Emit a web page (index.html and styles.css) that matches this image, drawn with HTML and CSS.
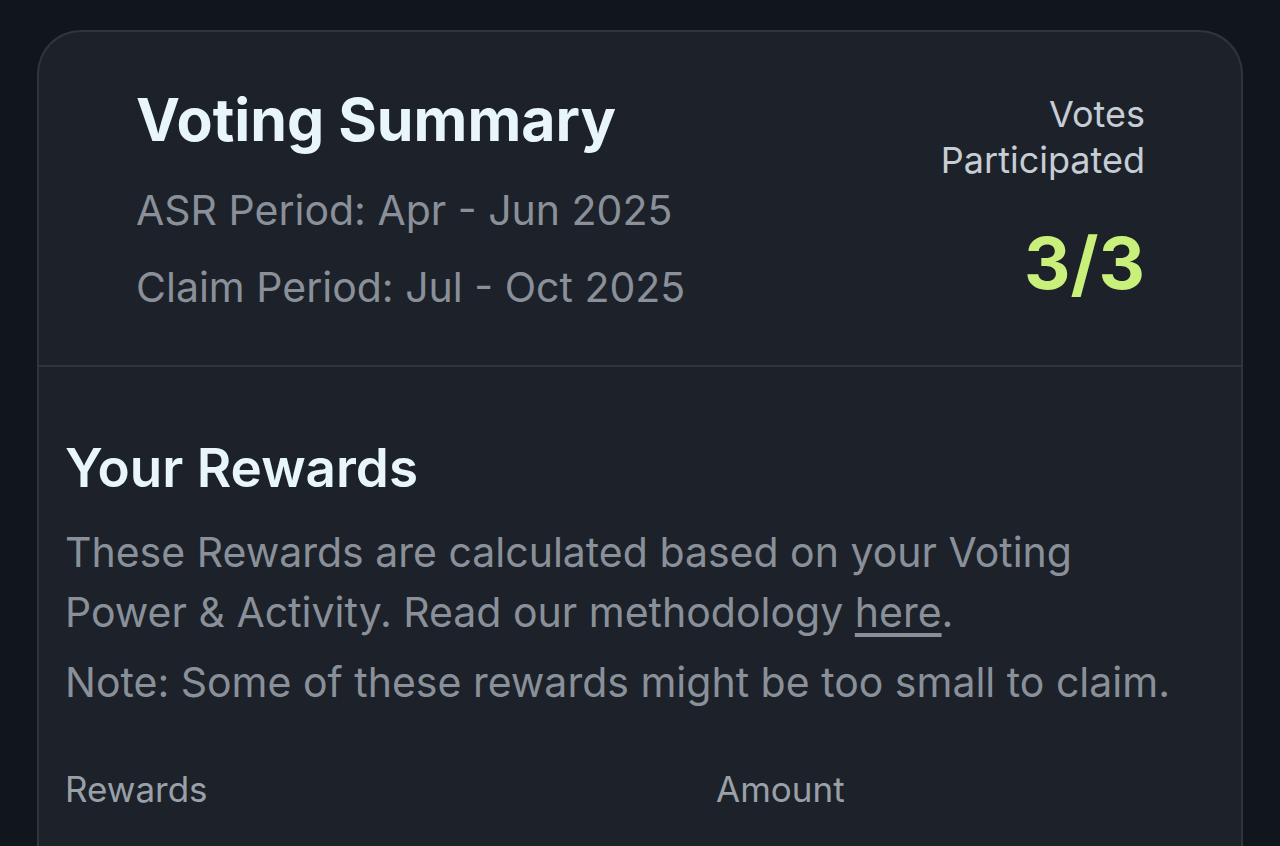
FILE: index.html
```html
<!DOCTYPE html>
<html>
<head>
<meta charset="utf-8" />
<title>Voting Summary</title>
<link rel="stylesheet" href="styles.css">
</head>
<body>
<div class="card">
    <div class="summary">
        <div class="summary-info">
            <h1 class="summary-title">Voting Summary</h1>
            <p class="period">ASR Period: Apr - Jun 2025</p>
            <p class="period">Claim Period: Jul - Oct 2025</p>
        </div>
        <div class="votes">
            <div class="votes-label">Votes<br>Participated</div>
            <div class="votes-count">3/3</div>
        </div>
    </div>
    <div class="rewards">
        <h2 class="rewards-title">Your Rewards</h2>
        <p class="rewards-text">These Rewards are calculated based on your Voting Power &amp; Activity. Read our methodology <a href="#">here</a>.</p>
        <p class="rewards-note">Note: Some of these rewards might be too small to claim.</p>
        <div class="rewards-head">
            <span class="col-reward">Rewards</span>
            <span class="col-amount">Amount</span>
        </div>
    </div>
</div>
</body>
</html>
```

FILE: styles.css
```css
html, body {
    margin:0;
    background:#11161d;
}
body {
    font-family:Inter, "Noto Sans", sans-serif;
    padding:30px 37px 0;
    height:846px;
    box-sizing:border-box;
    overflow:hidden;
}
.card {/*卡片*/
    background:#1d222a;
    border:2px solid #2f353d;
    border-bottom:none;
    border-radius:44px 44px 0 0;
    min-height:900px;
}
.summary {/*上半部分：标题 + 投票数*/
    display:flex;
    justify-content:space-between;
    box-sizing:border-box;
    height:335px;
    padding:53px 96px 0 97px;
    border-bottom:2px solid #2f353d;
}
.summary-title {
    margin:0 0 17px;
    font-size:59px;
    font-weight:700;
    line-height:70px;
    color:#e8f5fb;
}
.period {
    margin:0;
    font-size:41px;
    line-height:77px;
    color:#8a9099;
}
.votes {
    text-align:right;
}
.votes-label {
    margin-top:6px;
    font-size:36px;
    line-height:46px;
    color:#c6cdd4;
}
.votes-count {
    margin-top:40px;
    font-size:72px;
    font-weight:700;
    line-height:80px;
    color:#c8f07a;
}
.rewards {/*下半部分：奖励说明*/
    padding:69px 26px 0;
}
.rewards-title {
    margin:0 0 22px;
    font-size:53px;
    font-weight:600;
    line-height:64px;
    color:#e8f5fb;
}
.rewards-text, .rewards-note {
    margin:0;
    font-size:41px;
    line-height:60px;
    color:#8a9099;
}
.rewards-text {
    max-width:1090px;
}
.rewards-text a {
    color:#8a9099;
    text-decoration:underline;
    text-underline-offset:6px;
}
.rewards-note {
    margin-top:10px;
}
.rewards-head {
    display:flex;
    margin-top:56px;
    font-size:35px;
    line-height:42px;
    color:#9aa0a7;
}
.col-reward {
    width:651px;
}
```
